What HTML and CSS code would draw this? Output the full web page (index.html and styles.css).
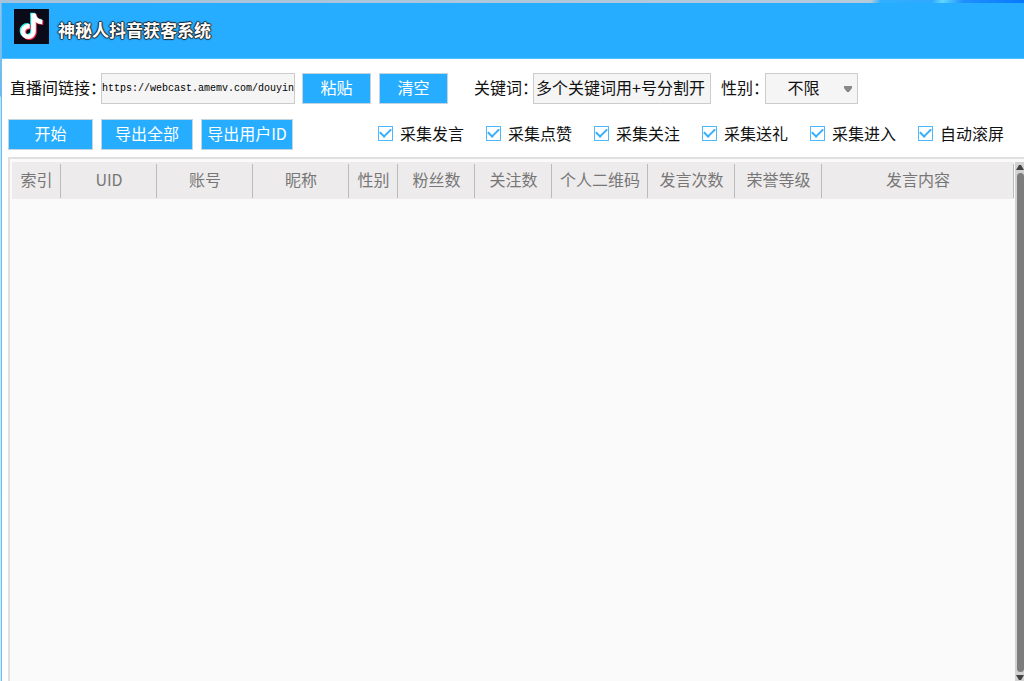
FILE: index.html
```html
<!DOCTYPE html>
<html lang="zh-CN">
<head>
<meta charset="utf-8">
<meta name="viewport" content="width=device-width, initial-scale=1">
<title>神秘人抖音获客系统</title>
<link rel="stylesheet" href="styles.css">
</head>
<body>
<div class="window">
  <header class="titlebar">
    <svg class="logo" viewBox="0 0 35 35" aria-hidden="true">
      <rect width="35" height="35" fill="#0b0a18"/>
      <g fill="none" stroke-width="4.600">
        <g stroke="#25f0e8" transform="translate(-1 -.8)">
          <path d="M19.500 4.500V22.500a5.300 5.300 0 1 1-5.300-5.300h1.500"/>
          <path d="M19.500 5c.6 5 4 7.700 8.800 8"/>
        </g>
        <g stroke="#fb2c54" transform="translate(1 .8)">
          <path d="M19.500 4.500V22.500a5.300 5.300 0 1 1-5.300-5.300h1.500"/>
          <path d="M19.500 5c.6 5 4 7.700 8.800 8"/>
        </g>
        <g stroke="#fff">
          <path d="M19.500 4.500V22.500a5.300 5.300 0 1 1-5.300-5.300h1.500"/>
          <path d="M19.500 5c.6 5 4 7.700 8.800 8"/>
        </g>
      </g>
    </svg>
    <h1 class="title">神秘人抖音获客系统</h1>
  </header>

  <main class="content">
    <form class="row">
      <label class="label label-link" for="link">直播间链接：</label>
      <input class="field field-link" id="link" type="text" value="https://webcast.amemv.com/douyin">
      <button class="btn btn-small" type="button">粘贴</button>
      <button class="btn btn-small" type="button">清空</button>
      <label class="label label-keyword" for="keyword">关键词：</label>
      <input class="field field-keyword" id="keyword" type="text" value="多个关键词用+号分割开">
      <label class="label label-gender" for="gender">性别：</label>
      <span class="select">
        <select class="field field-gender" id="gender"><option>不限</option><option>男</option><option>女</option></select>
        <svg class="arrow" viewBox="0 0 8 6" aria-hidden="true"><path d="M0 0h8v2L5 6H3L0 2z" fill="#888"/></svg>
      </span>
    </form>

    <div class="row row-actions">
      <button class="btn btn-start" type="button">开始</button>
      <button class="btn btn-export" type="button">导出全部</button>
      <button class="btn btn-export" type="button">导出用户ID</button>
      <div class="checks">
        <label class="check"><input type="checkbox" checked>采集发言</label>
        <label class="check"><input type="checkbox" checked>采集点赞</label>
        <label class="check"><input type="checkbox" checked>采集关注</label>
        <label class="check"><input type="checkbox" checked>采集送礼</label>
        <label class="check"><input type="checkbox" checked>采集进入</label>
        <label class="check"><input type="checkbox" checked>自动滚屏</label>
      </div>
    </div>

    <section class="list">
      <div class="list-body">
        <table class="grid">
          <colgroup>
            <col class="w-index"><col class="w-id"><col class="w-id"><col class="w-id"><col class="w-index"><col class="w-count"><col class="w-count"><col class="w-id"><col class="w-level"><col class="w-level"><col>
          </colgroup>
          <thead>
            <tr><th>索引</th><th>UID</th><th>账号</th><th>昵称</th><th>性别</th><th>粉丝数</th><th>关注数</th><th>个人二维码</th><th>发言次数</th><th>荣誉等级</th><th>发言内容</th></tr>
          </thead>
          <tbody></tbody>
        </table>
      </div>
      <div class="scrollbar" aria-hidden="true">
        <svg class="scroll-arrow" viewBox="0 0 8 6"><path d="M0 6L3 1h2l3 5z" fill="#444"/></svg>
        <div class="thumb"></div>
        <svg class="scroll-arrow" viewBox="0 0 8 6"><path d="M0 0L3 5h2l3-5z" fill="#444"/></svg>
      </div>
    </section>
  </main>
</div>
</body>
</html>
```
FILE: styles.css
```css
* {
  box-sizing: border-box;
}

body {
  margin: 0;
  min-height: 100vh;
  display: flex;
  flex-direction: column;
  padding: 3px 0 0 1px;
  font: 16px/24px "Noto Sans CJK SC", "Noto Sans", sans-serif;
  color: #111;
  background:
    linear-gradient(100deg, #a5c2da 0, #b4cbdc 85%, #30b0ff 86%, #30a8ff 91%, #60d8ff 92%, #2090ff 94%, #0878ff 100%) 0 0 / 100% 3px no-repeat,
    linear-gradient(#a5c2da 0, #78b4e0 96px, #c4e2fa 97px, #d4e9fb 100%);
}

.window {
  flex: 1;
  display: flex;
  flex-direction: column;
  border-left: 1px solid #62c0ff;
  background: #fff;
}

.titlebar {
  display: flex;
  align-items: flex-start;
  gap: 9px;
  height: 56px;
  padding: 6px 12px;
  background: #27adff;
  border-bottom: 1px solid #55bfff;
}

.logo {
  width: 35px;
  height: 35px;
}

.title {
  margin: 8px 0 0;
  font-size: 17px;
  line-height: 26px;
  font-weight: 700;
  color: #fff;
  text-shadow: 1px 0 1px #222, -1px 0 1px #222, 0 1px 1px #222, 0 -1px 1px #222;
}

.content {
  flex: 1;
  display: flex;
  flex-direction: column;
  padding: 14px 0 0 6px;
}

.row {
  display: flex;
  align-items: center;
  height: 30px;
  white-space: nowrap;
}

.row-actions {
  margin-top: 16px;
  gap: 8px;
}

.label,
.check {
  padding-bottom: 2px;
}

.label-link {
  width: 90px;
  padding-left: 2px;
}

.label-keyword {
  width: 85px;
  padding-left: 26px;
}

.label-gender {
  width: 54px;
  padding-left: 10px;
}

.field {
  height: 31px;
  margin: 0;
  padding: 0 2px 2px;
  border: 1px solid #ccc;
  border-radius: 0;
  background: #f5f5f5;
  color: #111;
  font: inherit;
}

.field-link {
  width: 194px;
  margin-left: 3px;
  padding: 0;
  font: 10px/16px "Liberation Mono", monospace;
  color: #000;
}

.field-keyword {
  width: 178px;
}

.select {
  position: relative;
}

.field-gender {
  display: block;
  width: 93px;
  padding: 0 16px 2px 0;
  appearance: none;
  text-align-last: center;
}

.arrow {
  position: absolute;
  right: 6px;
  top: 13px;
  width: 8px;
  height: 6px;
  pointer-events: none;
}

.btn {
  height: 31px;
  padding: 0 0 3px;
  border: 1px solid #c4d4de;
  background: #27adff;
  color: #fff;
  font: inherit;
}

.btn-small {
  width: 69px;
  margin-left: 8px;
}

.field-link + .btn-small {
  margin-left: 7px;
}

.btn-start {
  width: 85px;
}

.btn-export {
  width: 92px;
}

.checks {
  flex: 1;
  display: flex;
  justify-content: flex-end;
  gap: 22px;
  padding-right: 20px;
}

.check {
  display: flex;
  align-items: center;
  gap: 7px;
}

.check input {
  display: grid;
  place-content: center;
  width: 15px;
  height: 15px;
  margin: 0;
  appearance: none;
  border: 1px solid #4db9fc;
  background: #fff;
}

.check input:checked::after {
  content: "";
  width: 9px;
  height: 5px;
  margin-bottom: 3px;
  border: solid #35aefb;
  border-width: 0 0 2px 2px;
  transform: rotate(-45deg);
}

.list {
  flex: 1;
  display: flex;
  gap: 1px;
  margin-top: 8px;
  padding: 3px 0 0 2px;
  border: solid #e0e0e0;
  border-width: 2px 0 0 2px;
  background: #fafafa;
}

.list-body {
  flex: 1;
}

.grid {
  width: 100%;
  table-layout: fixed;
  border-collapse: collapse;
  background: #edebeb;
}

.grid th {
  height: 37px;
  padding: 0 0 3px;
  font-weight: 400;
  color: #777;
  white-space: nowrap;
  background: linear-gradient(#bbb, #bbb) right 2px / 1px 34px no-repeat;
}

.w-index {
  width: 49px;
}

.w-id {
  width: 96px;
}

.w-count {
  width: 77px;
}

.w-level {
  width: 87px;
}

.scrollbar {
  display: flex;
  flex-direction: column;
  align-items: center;
  gap: 3px;
  width: 9px;
  padding: 2px 0 0 1px;
  background: #d2d2d2;
}

.scroll-arrow {
  width: 8px;
  height: 6px;
}

.thumb {
  flex: 1;
  width: 7px;
  border-radius: 4px;
  background: #7d7d7d;
}
```
